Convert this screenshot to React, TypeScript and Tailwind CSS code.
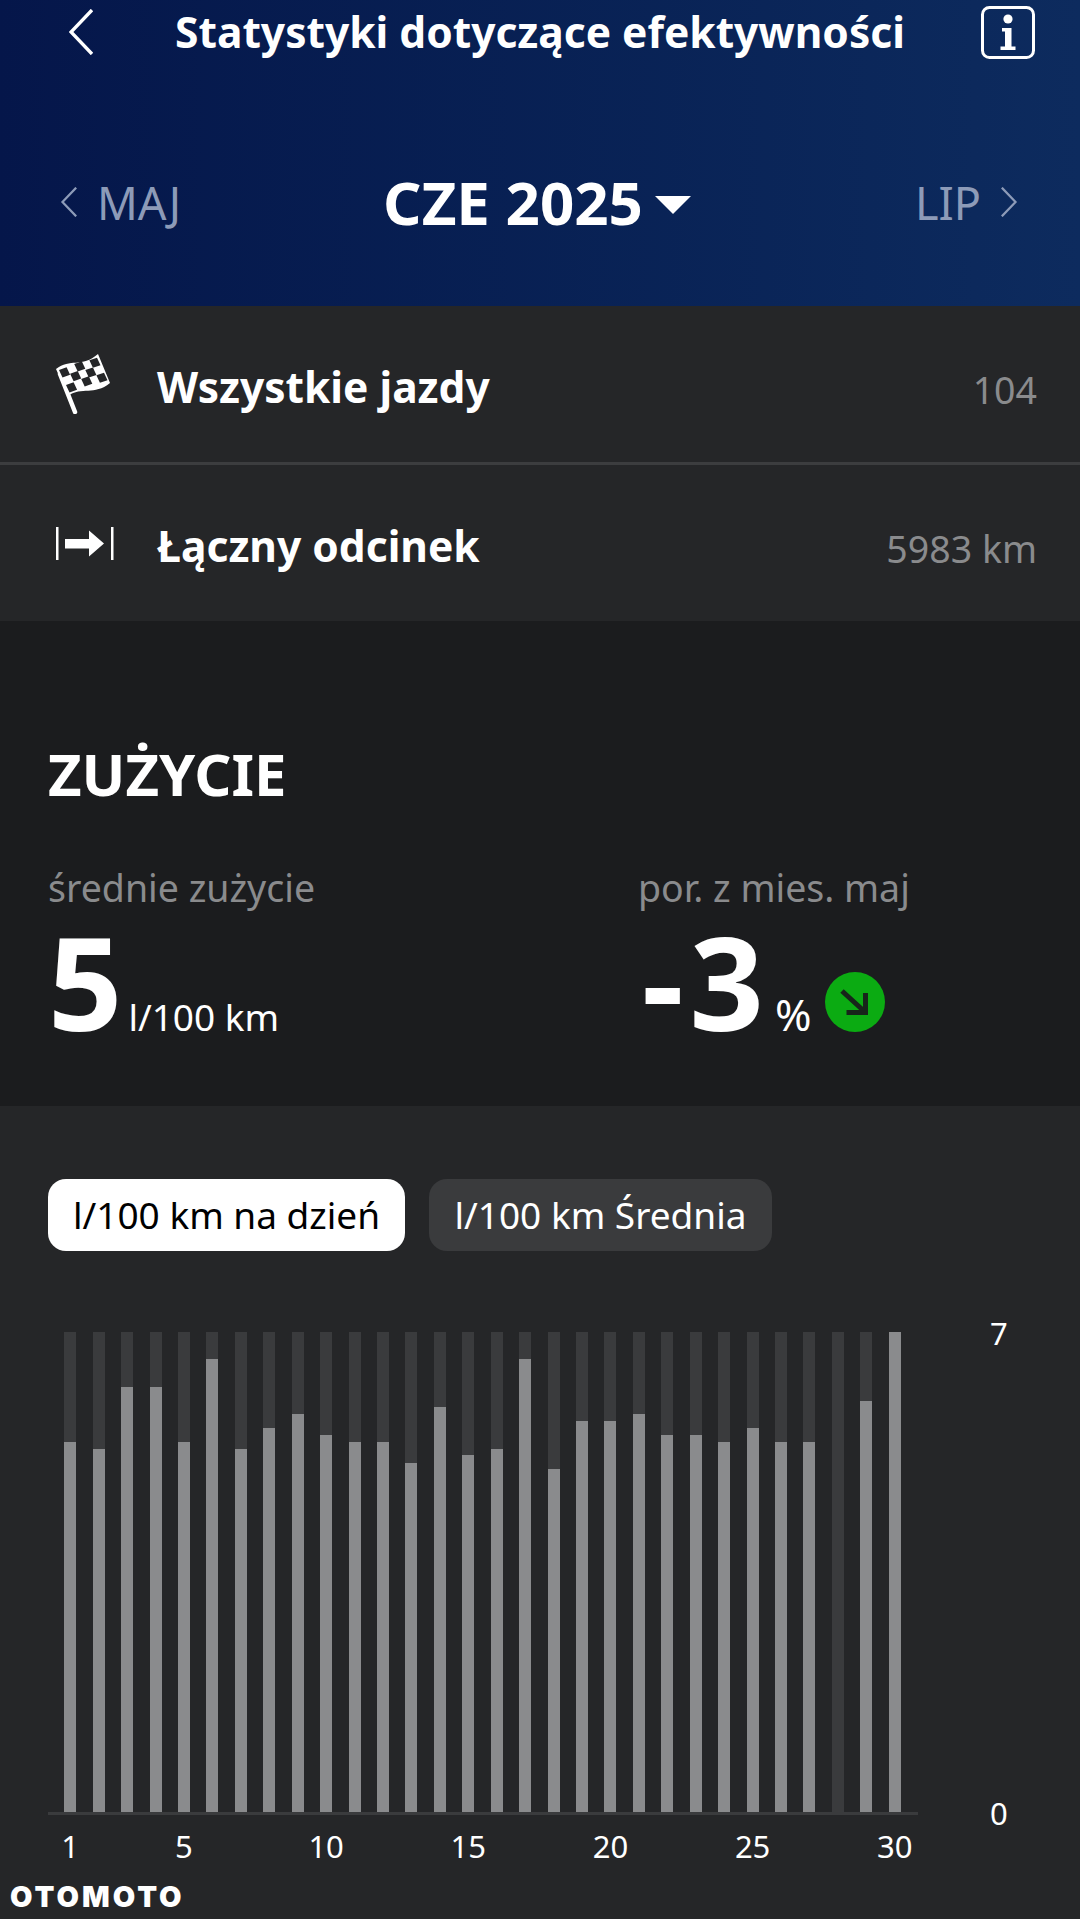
// share of the 7 l/100 km scale filled for each day
const days = [
  0.771, 0.757, 0.886, 0.886, 0.771, 0.943, 0.757, 0.8, 0.829, 0.786, 0.771, 0.771, 0.728, 0.843, 0.743, 0.757, 0.943,
  0.715, 0.814, 0.814, 0.829, 0.786, 0.786, 0.771, 0.8, 0.771, 0.771, 0, 0.857, 1,
];

const dayLabels: Record<number, string> = { 1: "1", 5: "5", 10: "10", 15: "15", 20: "20", 25: "25", 30: "30" };

function Chevron({ dir, className }: { dir: "left" | "right"; className: string }) {
  return (
    <svg viewBox="0 0 24 46" className={className} fill="none" stroke="currentColor" strokeWidth="3.4">
      <path d={dir === "left" ? "M23 1L2 23l21 22" : "M1 1l21 22L1 45"} />
    </svg>
  );
}

function InfoIcon() {
  return (
    <svg viewBox="0 0 54 53" className="h-[53px] w-[54px]" fill="none">
      <rect x="1.5" y="1.5" width="51" height="50" rx="7" stroke="white" strokeWidth="3" />
      <circle cx="27" cy="13" r="4.6" fill="white" />
      <path d="M21 22h9.500v18.500h4V44H19.500v-3.500h4.500V25.500h-3z" fill="white" />
    </svg>
  );
}

function FlagIcon() {
  const cells: string[] = [];
  for (let c = 0; c < 5; c++) {
    for (let r = 0; r < 3; r++) {
      if ((c + r) % 2 !== 0) continue;
      const x = 3 + c * 7.6 + r * 3.5;
      const y = 16 - c * 2.7 + r * 7.5 - Math.sin(c * 1.25) * 1.2;
      cells.push(`M${x} ${y}l7.6 -2.7l3.500 7.500l-7.600 2.700z`);
    }
  }
  return (
    <svg viewBox="0 0 54 60" className="h-[60px] w-[54px]" fill="none">
      <path d="M4 20l15 38" stroke="white" strokeWidth="4.5" strokeLinecap="round" />
      <path d="M0 15C14 4 26 14 42 0l12 29C38 42 26 32 12 42z" fill="white" />
      <path d={cells.join("")} fill="#252628" />
    </svg>
  );
}

function DistanceIcon() {
  return (
    <svg viewBox="0 0 58 33" className="h-[33px] w-[58px]" fill="white">
      <rect x="0" y="0" width="2.500" height="33" />
      <rect x="55" y="0" width="2.500" height="33" />
      <path d="M9 12h24V3.500l15 13-15 13V21.500H9z" />
    </svg>
  );
}

function SummaryRow({ icon, label, value }: { icon: React.ReactNode; label: string; value: string }) {
  return (
    <div className="flex h-[156px] items-center pl-[56px] pr-[43px]">
      <div className="flex w-[101px] items-center">{icon}</div>
      <span className="mt-[6px] flex-1 text-[42.5px] font-bold text-white">{label}</span>
      <span className="mt-[13px] text-[37.5px] text-[#8a8b8d]">{value}</span>
    </div>
  );
}

export default function App() {
  return (
    <div className="relative h-[1919px] w-[1080px] overflow-hidden bg-[#252628] font-['Noto_Sans',sans-serif]">
      <header className="h-[306px] bg-gradient-to-r from-[#05164a] to-[#0d2b5e]">
        <div className="relative flex h-[64px] items-center justify-between pl-[69px] pr-[45px]">
          <Chevron dir="left" className="h-[46px] w-[24px] text-white" />
          <h1 className="absolute inset-x-0 text-center text-[42.5px] font-bold whitespace-nowrap text-white">
            Statystyki dotyczące efektywności
          </h1>
          <InfoIcon />
        </div>
        <div className="mt-[108px] flex items-center pl-[60px] pr-[62px]">
          <div className="flex items-center gap-[19px] text-[45px] leading-none text-[#8d9bb8]">
            <Chevron dir="left" className="h-[30px] w-[18px]" />
            MAJ
          </div>
          <div className="ml-[202px] flex items-center gap-[12px] text-[60px] leading-none font-bold text-white">
            CZE 2025
            <div className="mt-[6px] h-0 w-0 border-x-[18px] border-t-[18px] border-x-transparent border-t-white" />
          </div>
          <div className="ml-auto flex items-center gap-[19px] text-[45px] leading-none text-[#8d9bb8]">
            LIP
            <Chevron dir="right" className="h-[30px] w-[18px]" />
          </div>
        </div>
      </header>

      <SummaryRow icon={<FlagIcon />} label="Wszystkie jazdy" value="104" />
      <div className="h-[3px] bg-[#3c3d3f]" />
      <SummaryRow icon={<DistanceIcon />} label="Łączny odcinek" value="5983 km" />

      <section className="h-[485px] bg-[#1b1c1e] pl-[48px] pt-[113px]">
        <h2 className="text-[58px] leading-[80px] font-bold text-white">ZUŻYCIE</h2>
        <div className="mt-[49px] flex">
          <div className="w-[590px]">
            <div className="text-[37.5px] leading-[50px] text-[#8a8b8d]">średnie zużycie</div>
            <div className="mt-[3px] flex items-baseline text-white">
              <span className="text-[130px] leading-[130px] font-bold">5</span>
              <span className="ml-[6px] text-[37px]">l/100 km</span>
            </div>
          </div>
          <div>
            <div className="text-[37.5px] leading-[50px] text-[#8a8b8d]">por. z mies. maj</div>
            <div className="mt-[3px] flex items-baseline text-white">
              <span className="ml-[4px] text-[130px] leading-[130px] font-bold tracking-[6px]">-3</span>
              <span className="ml-[5px] text-[44px]">%</span>
              <div className="mb-[15px] ml-[13px] self-end">
                <svg viewBox="0 0 60 60" className="h-[60px] w-[60px]" fill="none">
                  <circle cx="30" cy="30" r="30" fill="#0bab12" />
                  <path d="M17 19l23 21M40.500 21v19.500H21.500" stroke="#17251a" strokeWidth="5" />
                </svg>
              </div>
            </div>
          </div>
        </div>
      </section>

      <div className="flex gap-[24px] pl-[48px] pt-[73px]">
        <div className="flex h-[72px] w-[357px] items-center justify-center rounded-[18px] bg-white text-[37px] text-black">
          l/100 km na dzień
        </div>
        <div className="flex h-[72px] w-[343px] items-center justify-center rounded-[18px] bg-[#3a3b3d] text-[37px] text-white">
          l/100 km Średnia
        </div>
      </div>

      <div className="mt-[81px] flex">
        <div className="ml-[48px] w-[870px]">
          <div className="grid h-[480px] grid-cols-[repeat(30,minmax(0,1fr))] pl-[8px] pr-[9px]">
            {days.map((share, i) => (
              <div key={i} className="flex justify-center">
                <div className="flex h-full w-[12px] flex-col justify-end bg-[#3a3b3d]">
                  <div className="bg-[#8a8b8d]" style={{ height: share * 480 }} />
                </div>
              </div>
            ))}
          </div>
          <div className="h-[3px] bg-[#3a3b3d]" />
          <div className="mt-[10px] grid grid-cols-[repeat(30,minmax(0,1fr))] pl-[8px] pr-[9px]">
            {days.map((_, i) => (
              <div key={i} className="flex justify-center text-[31px] leading-[42px] whitespace-nowrap text-white">
                {dayLabels[i + 1] ?? ""}
              </div>
            ))}
          </div>
        </div>
        <div className="-mt-[20px] ml-[72px] flex h-[522px] flex-col justify-between text-[31px] leading-[42px] text-white">
          <span>7</span>
          <span>0</span>
        </div>
      </div>

      <div className="absolute bottom-[10px] left-[10px] font-['Inter',sans-serif] text-[29px] leading-[24px] font-black tracking-[3px] text-white">
        OTOMOTO
      </div>
    </div>
  );
}
